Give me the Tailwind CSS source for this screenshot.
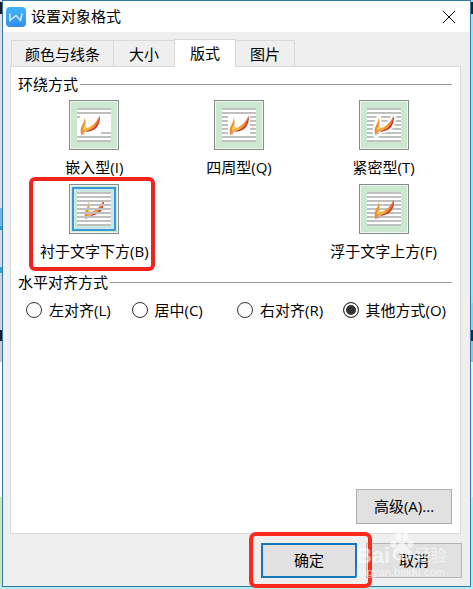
<!DOCTYPE html>
<html lang="zh-CN">
<head>
    <meta charset="UTF-8" />
    <title>设置对象格式</title>
    <meta name="viewport" content="width=device-width, initial-scale=1.0"/>
    <script src="https://cdn.jsdelivr.net/npm/@tailwindcss/browser@4"></script>
</head>
<body class="flex min-h-screen bg-[#b5eeea] pb-[2px] font-['Open_Sans','Noto_Sans_CJK_SC',sans-serif] text-[15px] leading-5 text-black">
    <!-- desktop showing at the left and right of the window -->
    <div class="w-[2px] shrink-0 bg-[linear-gradient(#d5dae0_2px,#16202c_2px_14px,#dddfe4_14px_208px,#79b5e0_208px_226px,#2f9bc8_226px_230px,#d5dae2_230px_267px,#3d9fd0_267px_273px,#cfd4da_273px_330px,#16202c_330px_341px,#c8cacc_341px_362px,#ffffff_362px_497px,#c8e8c8_497px)]"></div>

    <main class="flex min-w-0 flex-1 flex-col border border-[#2f7ba8] bg-[#efefef]">
        <header class="flex h-[31px] items-center bg-white pl-[3px] pr-[13px]">
            <svg class="mr-[5px] h-5 w-5 shrink-0" viewBox="0 0 20 20" aria-hidden="true">
                <defs>
                    <linearGradient id="logo" x1="0" y1="0" x2="0" y2="1">
                        <stop offset="0" stop-color="#41b4f5"/>
                        <stop offset="1" stop-color="#338ef2"/>
                    </linearGradient>
                </defs>
                <rect width="20" height="20" rx="4" fill="url(#logo)"/>
                <path d="M4 6.500v7L10 8.500l4.500 5 1.500-7" fill="none" stroke="#d3ecff" stroke-width="1.500"/>
            </svg>
            <h1 class="flex-1 pb-[2px]">设置对象格式</h1>
            <button type="button" aria-label="关闭" class="h-4 w-4">
                <svg viewBox="0 0 16 16" class="h-4 w-4"><path d="M2 2l12 12m0-12l-12 12" stroke="#000" stroke-width="1"/></svg>
            </button>
        </header>

        <nav class="flex items-end pl-[8px] pt-[7px]" role="tablist">
            <button type="button" role="tab" class="h-[26px] border border-b-0 border-[#d9d9d9] px-[13px]">颜色与线条</button>
            <button type="button" role="tab" class="h-[26px] border-t border-[#d9d9d9] px-[15px]">大小</button>
            <button type="button" role="tab" aria-selected="true" class="relative z-10 -mb-px h-[28px] border border-b-0 border-[#d9d9d9] bg-white px-[15px] pb-px">版式</button>
            <button type="button" role="tab" class="h-[26px] border-r border-t border-[#d9d9d9] px-[14px]">图片</button>
        </nav>

        <section class="ml-[7px] mr-[9px] flex flex-1 flex-col border border-[#d9d9d9] bg-white pt-[7px]" role="tabpanel">
            <h2 class="flex items-center gap-[2px] pl-[7px] pr-2">环绕方式<span class="h-px flex-1 bg-[#999]"></span></h2>

            <div class="relative mt-[6px] grid grid-cols-3 gap-y-[7px] pl-[11px] pr-1">
                <button type="button" class="flex flex-col items-center gap-[7px]">
                    <svg class="h-[50px] w-[50px]" viewBox="0 0 50 50" aria-hidden="true">
                        <defs>
                            <linearGradient id="fire" x1="0" y1="0" x2="1" y2="0">
                                <stop offset="0" stop-color="#e8862c"/>
                                <stop offset=".45" stop-color="#f6b437"/>
                                <stop offset="1" stop-color="#e4602c"/>
                            </linearGradient>
                            <g id="frame">
                                <rect x=".5" y=".5" width="49" height="49" fill="#eef7ef" stroke="#858c90"/>
                                <rect x="2" y="2" width="46" height="46" fill="#cce8cf"/>
                                <rect x="8" y="8" width="34" height="34" fill="#fff"/>
                            </g>
                            <g id="flame">
                                <path d="M17 35.500c2-3.500 5-3.500 8.500-4.500 6-1.800 9.500-5.500 9.500-15.500-2 7-5 11.500-10 13z" fill="#c5262d"/>
                                <path d="M16.500 35.500c-1.500-4-1-8 1-11 1.200-2 2.200-4 1.800-7 2 3 1.200 5.500 1 8-.2 1.800.4 2.700 2.200 2.200 4.500-1.300 9-5 12-12-.5 7.500-3.500 11.800-8.500 13.800-4 1.500-7.500 1.500-9.500 6z" fill="url(#fire)"/>
                                <path d="M18 31c0-2 .6-4 1.800-5.300 0 2 1 3 3.200 2.500-2.300.6-4 1.500-5 2.800z" fill="#fbd25c"/>
                            </g>
                            <path id="lines" d="M8 9h34M8 13h34M8 17h34M8 21h34M8 25h34M8 29h34M8 33h34M8 37h34M8 41h34" fill="none" stroke="#c0c0c0" stroke-width="2"/>
                        </defs>
                        <use href="#frame"/>
                        <path d="M8 9h34M8 13h34M8 17h3M32 33h10M8 37h34M8 41h34" stroke="#c0c0c0" stroke-width="2"/>
                        <use href="#flame" x="-4"/>
                    </svg>
                    嵌入型(I)
                </button>
                <button type="button" class="flex flex-col items-center gap-[7px]">
                    <svg class="h-[50px] w-[50px]" viewBox="0 0 50 50" aria-hidden="true">
                        <use href="#frame"/>
                        <use href="#lines"/>
                        <rect x="14" y="15" width="22" height="21" fill="#fff"/>
                        <use href="#flame"/>
                    </svg>
                    四周型(Q)
                </button>
                <button type="button" class="flex flex-col items-center gap-[7px]">
                    <svg class="h-[50px] w-[50px]" viewBox="0 0 50 50" aria-hidden="true">
                        <use href="#frame"/>
                        <use href="#lines"/>
                        <path d="M15 38c-3-7-1-14 3-22h4l1 9c4-1 7-5 10-11h4c1 9-2 15-8 18-5 1-8 1-10 6z" fill="#fff"/>
                        <use href="#flame"/>
                    </svg>
                    紧密型(T)
                </button>
                <button type="button" aria-pressed="true" class="flex flex-col items-center gap-[7px]">
                    <svg class="h-[50px] w-[50px]" viewBox="0 0 50 50" aria-hidden="true">
                        <use href="#frame"/>
                        <use href="#flame"/>
                        <use href="#lines"/>
                        <rect x="6" y="6" width="38" height="38" fill="none" stroke="#c5e9ee" stroke-width="2"/>
                        <rect x="4" y="4" width="42" height="42" fill="none" stroke="#3d97d3" stroke-width="2"/>
                    </svg>
                    衬于文字下方(B)
                </button>
                <button type="button" class="col-start-3 flex flex-col items-center gap-[7px]">
                    <svg class="h-[50px] w-[50px]" viewBox="0 0 50 50" aria-hidden="true">
                        <use href="#frame"/>
                        <use href="#lines"/>
                        <use href="#flame"/>
                    </svg>
                    浮于文字上方(F)
                </button>
                <!-- highlight round the chosen layout -->
                <span class="pointer-events-none absolute -bottom-[10px] left-[18px] h-[94px] w-[126px] rounded-[6px] border-4 border-[#ef241c]"></span>
            </div>

            <h2 class="mt-[11px] flex items-center gap-[2px] pl-[7px] pr-2">水平对齐方式<span class="h-px flex-1 bg-[#999]"></span></h2>
            <div class="mt-2 grid grid-cols-4 whitespace-nowrap pl-[15px] pr-3">
                <label class="flex items-center gap-[7px]"><input type="radio" name="align" class="h-4 w-4 shrink-0 appearance-none rounded-full border border-[#333] checked:bg-[#333] checked:shadow-[inset_0_0_0_2px_white]"/>左对齐(L)</label>
                <label class="flex items-center gap-[7px]"><input type="radio" name="align" class="h-4 w-4 shrink-0 appearance-none rounded-full border border-[#333] checked:bg-[#333] checked:shadow-[inset_0_0_0_2px_white]"/>居中(C)</label>
                <label class="flex items-center gap-[7px]"><input type="radio" name="align" class="h-4 w-4 shrink-0 appearance-none rounded-full border border-[#333] checked:bg-[#333] checked:shadow-[inset_0_0_0_2px_white]"/>右对齐(R)</label>
                <label class="flex items-center gap-[7px]"><input type="radio" name="align" checked class="h-4 w-4 shrink-0 appearance-none rounded-full border border-[#333] checked:bg-[#333] checked:shadow-[inset_0_0_0_2px_white]"/>其他方式(O)</label>
            </div>

            <button type="button" class="mb-[9px] mr-2 mt-auto h-[35px] w-24 self-end border border-[#adadad] bg-[#e1e1e1] pb-[2px]">高级(A)...</button>
        </section>

        <footer class="relative flex justify-end gap-[9px] pb-2 pr-2 pt-[9px]">
            <div class="relative">
                <button type="button" class="h-[35px] w-24 border-2 border-[#1777bd] bg-[#e1e1e1] pb-[2px]">确定</button>
                <span class="pointer-events-none absolute -left-3 -top-[11px] h-[56px] w-[123px] rounded-[7px] border-4 border-[#fb2a1c]"></span>
            </div>
            <button type="button" class="h-[35px] w-24 border border-[#b5b5b5] bg-[#e1e1e1] pb-[2px]">取消</button>
            <!-- watermark -->
            <div class="pointer-events-none absolute right-[22px] top-0 w-[92px] text-white/60" aria-hidden="true">
                <div class="flex items-center pt-[10px] font-['Liberation_Sans','Noto_Sans_CJK_SC',sans-serif] text-[22px] font-bold leading-6">
                    <span>Bai</span>
                    <svg class="-mt-5 h-[30px] w-[24px] shrink-0" viewBox="0 0 24 30" fill="currentColor">
                        <ellipse cx="3.500" cy="13" rx="2.800" ry="3.800"/>
                        <ellipse cx="8.500" cy="5.500" rx="3" ry="4.200"/>
                        <ellipse cx="15.500" cy="5.500" rx="3" ry="4.200"/>
                        <ellipse cx="20.500" cy="13" rx="2.800" ry="3.800"/>
                        <path fill-rule="evenodd" d="M12 11c3 0 4 3 6 5.500 2.500 2.500 4 4.500 3.500 8-.5 3-2 4.500-5 4.500H7.500c-3 0-4.500-1.500-5-4.500-.5-3.500 1-5.500 3.500-8C8 14 9 11 12 11zm-4 11c-3 0-3 5 0 5h2v-7H9v2zm5 0v5h5v-5h-1v4h-2v-4z"/>
                    </svg>
                    <span class="text-base font-normal">经验</span>
                </div>
                <div class="-mt-1 font-['Liberation_Sans',sans-serif] text-[11px] leading-4">jingyan.baidu.com</div>
            </div>
        </footer>
    </main>

    <div class="w-[2px] shrink-0 bg-[linear-gradient(#a5d5fa_2px,#101f42_2px_14px,#a9dbf8_14px_303px,#9cc8ee_303px_330px,#142a58_330px_341px,#9cbfe2_341px_362px,#e2ffff_362px_497px,#b5eeea_497px)]"></div>
</body>
</html>
